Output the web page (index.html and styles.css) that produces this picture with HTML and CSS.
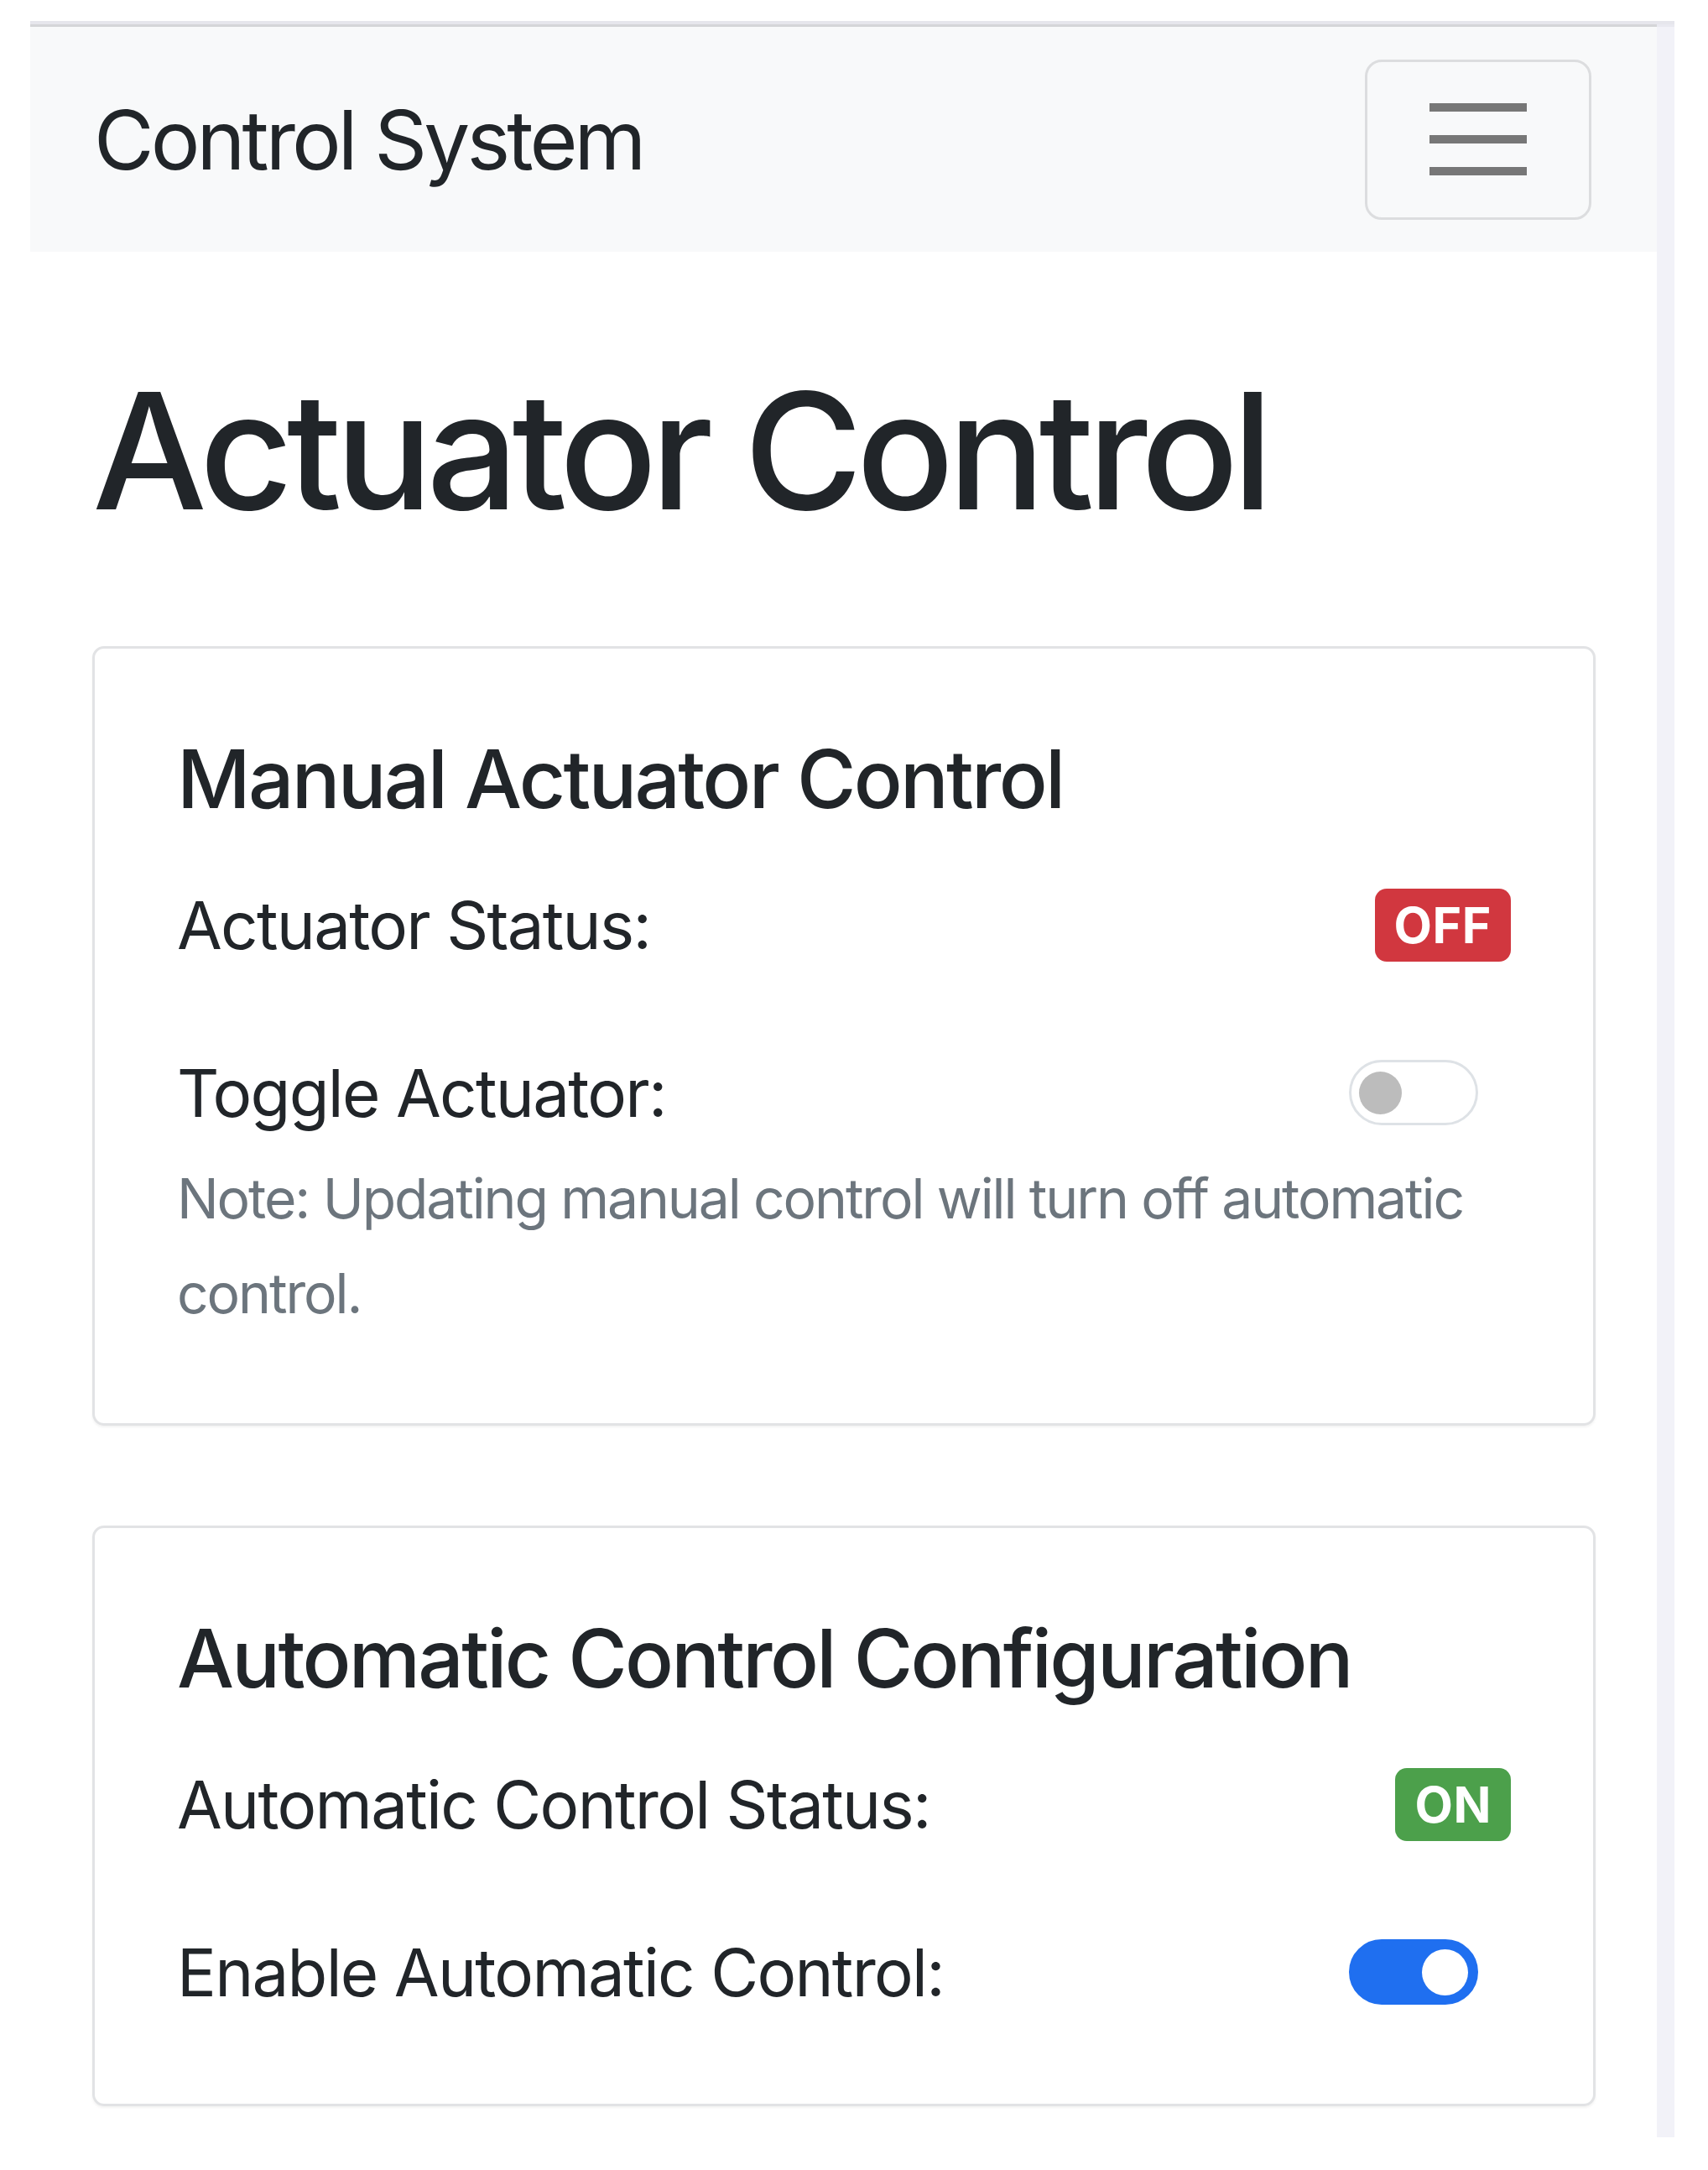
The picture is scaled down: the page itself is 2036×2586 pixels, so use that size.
FILE: index.html
```html
<!DOCTYPE html>
<html lang="en">
<head>
	<meta charset="utf-8">
	<title>Control System</title>
	<link rel="stylesheet" href="styles.css">
</head>
<body>
	<div class="frame">
		<div class="page">
			<nav class="navbar">
				<a href="javascript:;" class="brand">Control System</a>
				<button class="toggler" type="button">
					<span></span>
					<span></span>
					<span></span>
				</button>
			</nav>
			<div class="container">
				<h1 class="title">Actuator Control</h1>

				<div class="card">
					<h5 class="card-title">Manual Actuator Control</h5>
					<div class="row">
						<span class="label">Actuator Status:</span>
						<span class="badge badge-off">OFF</span>
					</div>
					<div class="row">
						<span class="label">Toggle Actuator:</span>
						<span class="switch"><span class="knob"></span></span>
					</div>
					<p class="note">Note: Updating manual control will turn off automatic control.</p>
				</div>

				<div class="card">
					<h5 class="card-title">Automatic Control Configuration</h5>
					<div class="row">
						<span class="label">Automatic Control Status:</span>
						<span class="badge badge-on">ON</span>
					</div>
					<div class="row">
						<span class="label">Enable Automatic Control:</span>
						<span class="switch checked"><span class="knob"></span></span>
					</div>
				</div>
			</div>
		</div>
		<div class="scrollbar"></div>
	</div>
</body>
</html>
```

FILE: styles.css
```css
* {
	margin: 0;
	padding: 0;
	box-sizing: border-box;
}
body {
	background: #fff;
	font-family: Inter, "Noto Sans", sans-serif;
	color: #212529;
}
.frame {
	display: flex;
	width: 1960px;
	height: 2522px;
	margin: 25px 0 0 36px;
	border-top: 4px solid #e6e6ec;
}
.page {
	width: 1939px;
	border-top: 3px solid #d4d5d8;
}
.scrollbar {
	width: 21px;
	background: #f2f2f8;
	border-top: 3px solid #e9e9f0;
}

/* navbar */
.navbar {
	display: flex;
	align-items: center;
	justify-content: space-between;
	height: 268px;
	padding: 0 78px 0 76px;
	background: #f8f9fa;
}
.brand {
	font-size: 98px;
	letter-spacing: -0.04em;
	color: #212529;
	text-decoration: none;
}
.toggler {
	display: flex;
	flex-direction: column;
	align-items: center;
	justify-content: center;
	gap: 28px;
	width: 270px;
	height: 191px;
	background: transparent;
	border: 3px solid #dcdddf;
	border-radius: 20px;
}
.toggler span {
	display: block;
	width: 116px;
	height: 10px;
	background: #777;
}

/* content */
.container {
	padding: 0 73px 0 74px;
}
.title {
	margin: 122px 0 116px;
	font-size: 193px;
	font-weight: 500;
	line-height: 1.2;
	letter-spacing: -0.039em;
}
.card {
	margin-bottom: 119px;
	padding: 98px;
	border: 3px solid #e2e3e5;
	border-radius: 14px;
	box-shadow: 0 2px 3px rgba(0, 0, 0, .05);
}
.card-title {
	margin-bottom: 58px;
	font-size: 96px;
	font-weight: 500;
	line-height: 1.2;
	letter-spacing: -0.028em;
}
.row {
	display: flex;
	align-items: center;
	justify-content: space-between;
	height: 117px;
	font-size: 78px;
}
.row .label {
	letter-spacing: -0.022em;
}
.row + .row {
	margin-top: 83px;
}
.badge {
	display: inline-flex;
	align-items: center;
	height: 87px;
	padding: 0 23px;
	font-size: 59px;
	font-weight: 700;
	letter-spacing: 0.01em;
	color: #fff;
	border-radius: 14px;
}
.badge-off {
	background: #d1373f;
}
.badge-on {
	background: #4ca04b;
}
.switch {
	display: flex;
	align-items: center;
	width: 154px;
	height: 78px;
	margin-right: 39px;
	padding: 0 9px;
	border: 3px solid #dee2e6;
	border-radius: 40px;
	background: #fff;
}
.switch .knob {
	width: 51px;
	height: 51px;
	border-radius: 50%;
	background: #bcbcbc;
}
.switch.checked {
	justify-content: flex-end;
	border-color: #1f6ff0;
	background: #1f6ff0;
}
.switch.checked .knob {
	width: 55px;
	height: 55px;
	background: #fff;
}
.note {
	margin-top: 11px;
	font-size: 66px;
	line-height: 113px;
	letter-spacing: -0.032em;
	color: #6c757d;
}
```
